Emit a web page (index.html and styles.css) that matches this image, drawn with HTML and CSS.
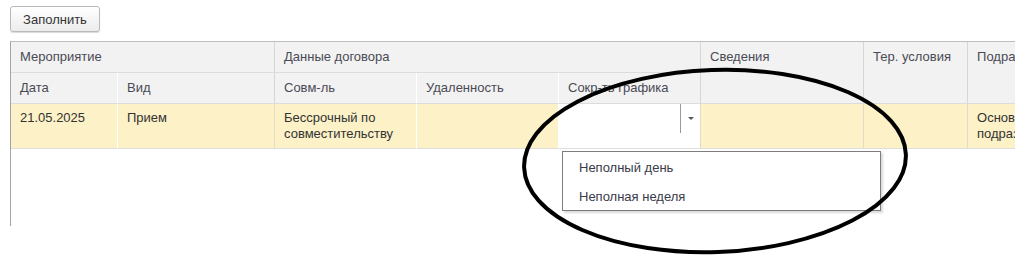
FILE: index.html
```html
<!DOCTYPE html>
<html>

<head>
  <meta charset="utf-8">
  <title>Заполнение</title>
  <link rel="stylesheet" href="styles.css">
</head>

<body>
  <div class="toolbar">
    <button class="btn" type="button">Заполнить</button>
  </div>

  <div class="grid-wrap">
    <table class="grid">
      <colgroup>
        <col style="width: 107px">
        <col style="width: 157px">
        <col style="width: 142px">
        <col style="width: 142px">
        <col style="width: 142px">
        <col style="width: 163px">
        <col style="width: 104px">
        <col style="width: 120px">
      </colgroup>
      <thead>
        <tr>
          <th colspan="2" class="group">Мероприятие</th>
          <th colspan="3" class="group">Данные договора</th>
          <th rowspan="2" class="group">Сведения</th>
          <th rowspan="2" class="group">Тер. условия</th>
          <th rowspan="2" class="group">Подразделение</th>
        </tr>
        <tr>
          <th>Дата</th>
          <th class="group">Вид</th>
          <th>Совм-ль</th>
          <th>Удаленность</th>
          <th class="group">Сокр-ть графика</th>
        </tr>
      </thead>
      <tbody>
        <tr class="current">
          <td>21.05.2025</td>
          <td class="group">Прием</td>
          <td>Бессрочный по совместительству</td>
          <td></td>
          <td class="edit group">
            <div class="combo">
              <span class="combo-value"></span>
              <span class="combo-btn"><span class="arrow"></span></span>
            </div>
          </td>
          <td class="group"></td>
          <td class="group"></td>
          <td>Основное подразделение</td>
        </tr>
      </tbody>
    </table>
  </div>

  <ul class="popup">
    <li>Неполный день</li>
    <li>Неполная неделя</li>
  </ul>

  <svg class="mark" width="1024" height="258" viewBox="0 0 1024 258">
    <ellipse cx="715" cy="161" rx="191" ry="91" transform="rotate(-2 715 161)" />
  </svg>
</body>

</html>
```

FILE: styles.css
```css
html,
body {
  margin: 0;
  padding: 0;
  background-color: #fff;
  font-family: "Liberation Sans", Arial, sans-serif;
  font-size: 13px;
  color: #333;
  overflow: hidden;
}

.toolbar {
  padding: 6px 0 0 10px;
  height: 41px;
  box-sizing: border-box;
}

.btn {
  width: 90px;
  height: 26px;
  padding: 0;
  font-family: inherit;
  font-size: 13px;
  color: #333;
  background: linear-gradient(#ffffff, #ececec);
  border: 1px solid #b9b9b9;
  border-radius: 3px;
  box-shadow: 0 1px 1px rgba(0, 0, 0, 0.15);
}

.grid-wrap {
  margin-left: 10px;
  width: 1005px;
  height: 185px;
  border-left: 1px solid #a3a3a3;
  border-top: 1px solid #bdbdbd;
  box-sizing: border-box;
  overflow: hidden;
}

.grid {
  table-layout: fixed;
  border-collapse: separate;
  border-spacing: 0;
  width: 1077px;
}

.grid th,
.grid td {
  box-sizing: border-box;
  text-align: left;
  vertical-align: top;
  font-weight: normal;
  line-height: 16px;
  padding: 7px 9px 0 9px;
  overflow: hidden;
  white-space: nowrap;
}

.grid th {
  height: 31px;
  background-color: #f2f2f2;
  color: #4a4a55;
  border-right: 1px solid #fff;
  border-bottom: 1px solid #dcdcdc;
}

.grid th.group {
  border-right-color: #d6d6d6;
}

.grid td {
  height: 45px;
  padding-top: 6px;
  white-space: normal;
  background-color: #fcf1c7;
  border-right: 1px solid #fff;
  border-bottom: 1px solid #dedede;
}

.grid td.group {
  border-right-color: #e2dcc4;
}

.grid td.edit {
  padding: 0;
  background-color: #fff;
}

.combo {
  display: flex;
  height: 44px;
}

.combo-value {
  flex: 1;
}

.combo-btn {
  width: 19px;
  height: 29px;
  border-left: 1px solid #9a9a9a;
  display: flex;
  align-items: center;
  justify-content: center;
}

.arrow {
  width: 0;
  height: 0;
  border-left: 3px solid transparent;
  border-right: 3px solid transparent;
  border-top: 3px solid #555;
}

.popup {
  position: absolute;
  left: 562px;
  top: 151px;
  width: 319px;
  height: 60px;
  margin: 0;
  padding: 0;
  list-style: none;
  box-sizing: border-box;
  background-color: #fff;
  border: 1px solid #7d7d7d;
  box-shadow: 2px 2px 2px rgba(0, 0, 0, 0.15);
}

.popup li {
  height: 29px;
  line-height: 29px;
  padding-left: 16px;
  color: #3a3a4a;
}

.popup li:first-child {
  margin-top: 1px;
}

.mark {
  position: absolute;
  left: 0;
  top: 0;
  pointer-events: none;
}

.mark ellipse {
  fill: none;
  stroke: #000;
  stroke-width: 4;
}
```
